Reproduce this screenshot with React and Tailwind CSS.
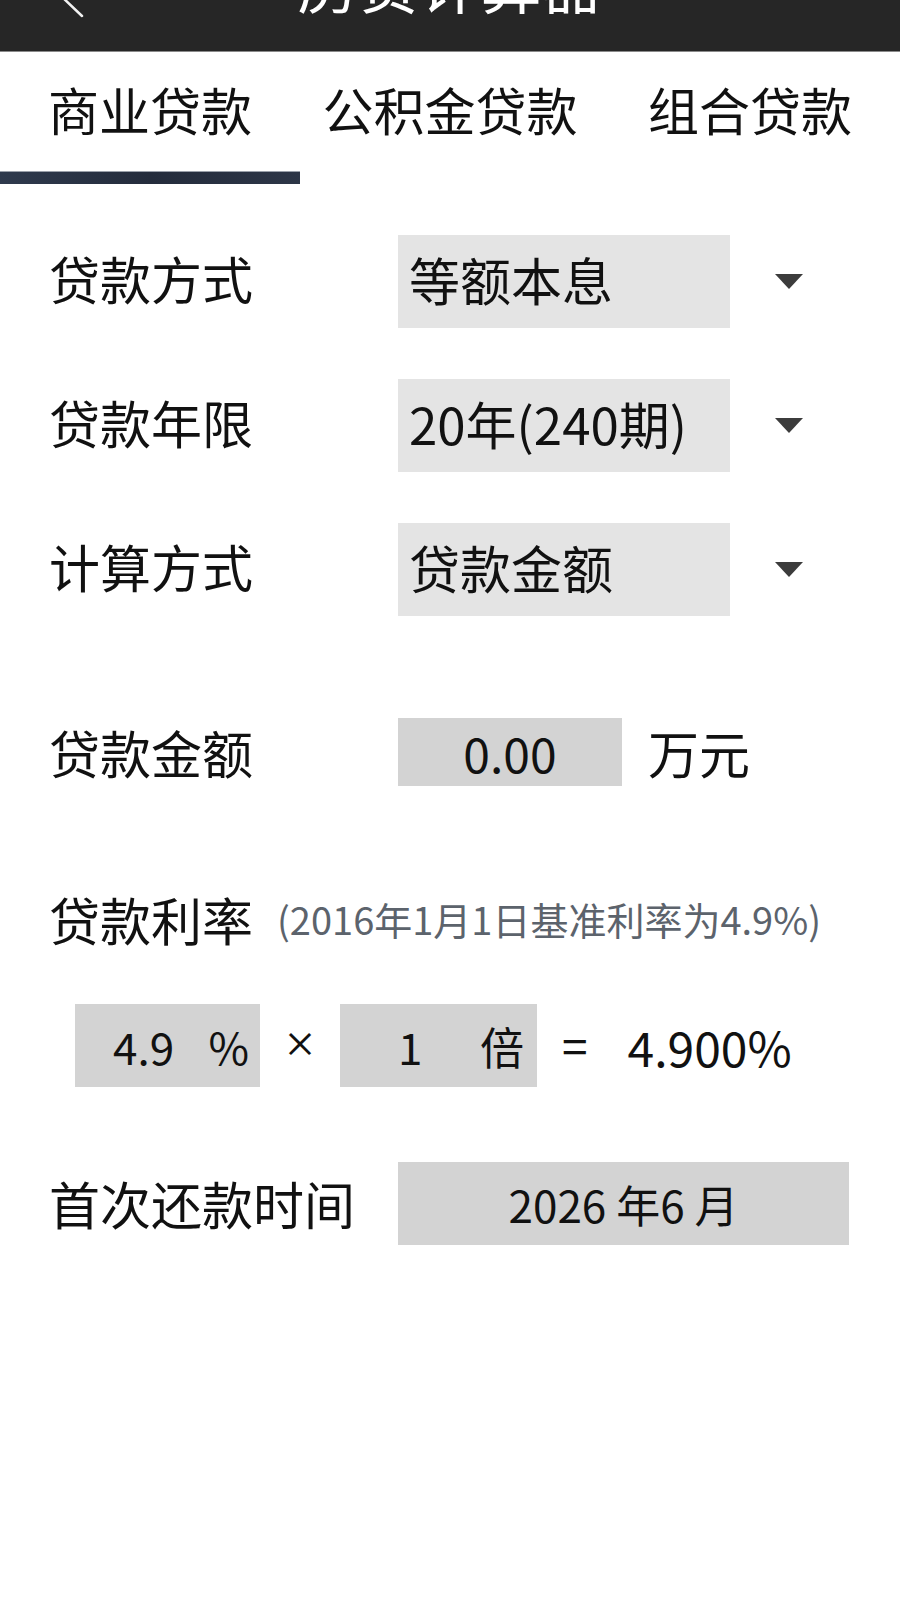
import React from 'react';

const tabs = ['商业贷款', '公积金贷款', '组合贷款'];

const selects = [
  { label: '贷款方式', value: '等额本息' },
  { label: '贷款年限', value: '20年(240期)' },
  { label: '计算方式', value: '贷款金额' },
];

const Caret = () => (
  <svg width="28" height="15" viewBox="0 0 28 15" className="ml-[45px] shrink-0">
    <path d="M0 0 L28 0 L14 15 Z" fill="#3c3c3c" />
  </svg>
);

export default function App() {
  return (
    <div className="min-h-[1600px] w-[900px] bg-white text-[#111] font-['Noto_Sans_CJK_SC','Noto_Sans',sans-serif]">
      {/* Title bar (scrolled, title partially cut off) */}
      <div className="relative h-[52px] overflow-hidden border-b border-[#8a8a8a] bg-[#262626]">
        <svg width="100" height="52" viewBox="0 0 100 52" className="absolute left-0 top-0">
          <path d="M82 -56 L40 -24 L82 16" fill="none" stroke="#f2f2f2" strokeWidth="2.5" strokeLinecap="round" />
        </svg>
        <div className="-mt-[48px] text-center text-[61px] leading-none text-white">房贷计算器</div>
      </div>

      {/* Tabs */}
      <div className="grid grid-cols-3">
        {tabs.map((t, i) => (
          <div key={t} className="flex h-[132px] flex-col">
            <div className="pt-[32px] text-center text-[51px] leading-none">{t}</div>
            {i === 0 && (
              <div className="mt-auto h-[13px] border-t border-[#9aa0aa] bg-gradient-to-r from-[#2f3a4d] via-[#242c3c] to-[#2d3647]" />
            )}
          </div>
        ))}
      </div>

      <div className="pl-[49px]">
        {/* Dropdown rows */}
        <div className="flex flex-col gap-[51px] pt-[51px]">
          {selects.map((s) => (
            <div key={s.label} className="flex h-[93px] items-center">
              <div className="mb-[6px] w-[349px] text-[51px] leading-none">{s.label}</div>
              <div className="flex h-[93px] w-[332px] items-center bg-[#e4e4e4] pb-[4px] pl-[11px] text-[51px] leading-none">
                {s.value}
              </div>
              <Caret />
            </div>
          ))}
        </div>

        {/* Amount */}
        <div className="mt-[102px] flex h-[68px] items-center">
          <div className="w-[349px] text-[51px] leading-none">贷款金额</div>
          <div className="flex h-[68px] w-[224px] items-center justify-center bg-[#d3d3d3] text-[48px] leading-none">
            0.00
          </div>
          <div className="ml-[26px] text-[51px] leading-none">万元</div>
        </div>

        {/* Rate */}
        <div className="mt-[108px] flex h-[50px] items-center">
          <div className="text-[51px] leading-none">贷款利率</div>
          <div className="ml-[24px] text-[38px] leading-none text-[#5c636c]">(2016年1月1日基准利率为4.9%)</div>
        </div>

        <div className="mt-[60px] flex h-[83px] items-center">
          <div className="ml-[26px] flex h-[83px] w-[185px] items-center bg-[#d3d3d3] pl-[38px] pr-[11px] text-[44px] leading-none">
            <span>4.9</span>
            <span className="ml-auto">%</span>
          </div>
          <div className="mb-[6px] w-[80px] text-center text-[34px] font-medium leading-none">×</div>
          <div className="flex h-[83px] w-[197px] items-center bg-[#d3d3d3] pl-[58px] pr-[13px] text-[44px] leading-none">
            <span>1</span>
            <span className="ml-auto">倍</span>
          </div>
          <div className="mb-[4px] ml-[25px] text-[46px] leading-none">=</div>
          <div className="ml-[40px] text-[48px] leading-none">4.900%</div>
        </div>

        {/* First repayment */}
        <div className="mt-[75px] flex h-[83px] items-center">
          <div className="w-[349px] text-[51px] leading-none">首次还款时间</div>
          <div className="flex h-[83px] w-[451px] items-center justify-center bg-[#d3d3d3] text-[44px] leading-none">
            2026 年6 月
          </div>
        </div>
      </div>
    </div>
  );
}
